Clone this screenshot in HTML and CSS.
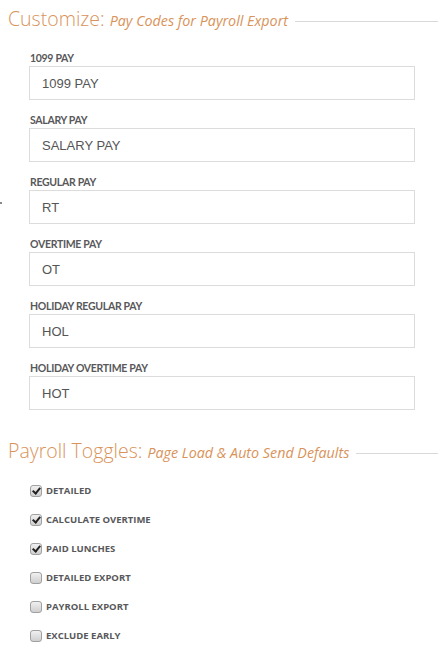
FILE: index.html
```html
<!DOCTYPE html>
<html lang="en">
<head>
    <meta charset="UTF-8">
    <title>Payroll Settings</title>
    <link rel="stylesheet" href="styles.css">
</head>
<body>
    <div class="panel">
        <h2 class="section-title">
            <span class="title-main">Customize:</span>
            <span class="title-sub">Pay Codes for Payroll Export</span>
            <span class="title-rule"></span>
        </h2>

        <div class="fields">
            <div class="field">
                <label>1099 PAY</label>
                <input type="text" value="1099 PAY">
            </div>
            <div class="field">
                <label>SALARY PAY</label>
                <input type="text" value="SALARY PAY">
            </div>
            <div class="field">
                <span class="stray"></span>
                <label>REGULAR PAY</label>
                <input type="text" value="RT">
            </div>
            <div class="field">
                <label>OVERTIME PAY</label>
                <input type="text" value="OT">
            </div>
            <div class="field">
                <label>HOLIDAY REGULAR PAY</label>
                <input type="text" value="HOL">
            </div>
            <div class="field">
                <label>HOLIDAY OVERTIME PAY</label>
                <input type="text" value="HOT">
            </div>
        </div>

        <h2 class="section-title second">
            <span class="title-main">Payroll Toggles:</span>
            <span class="title-sub">Page Load &amp; Auto Send Defaults</span>
            <span class="title-rule"></span>
        </h2>

        <ul class="toggles">
            <li><span class="box checked"></span>DETAILED</li>
            <li><span class="box checked"></span>CALCULATE OVERTIME</li>
            <li><span class="box checked"></span>PAID LUNCHES</li>
            <li><span class="box"></span>DETAILED EXPORT</li>
            <li><span class="box"></span>PAYROLL EXPORT</li>
            <li><span class="box"></span>EXCLUDE EARLY</li>
        </ul>
    </div>
</body>
</html>
```

FILE: styles.css
```css
body {
    margin: 0;
    background: #ffffff;
    font-family: Lato, 'Open Sans', sans-serif;
    color: #555555;
}
.panel {
    width: 438px;
}
.section-title {
    display: flex;
    align-items: baseline;
    margin: 0;
    padding: 5px 0 0 8px;
    height: 28px;
    font-family: 'Open Sans', sans-serif;
    font-weight: 300;
    color: #d9935a;
}
.section-title.second {
    padding-top: 0;
    margin-top: 27px;
}
.title-main {
    font-size: 19.5px;
}
.title-sub {
    font-size: 14.3px;
    font-style: italic;
    font-weight: 400;
    margin-left: 5px;
}
.title-rule {
    flex: 1;
    height: 1px;
    background: #d9d9d9;
    margin-left: 7px;
    align-self: center;
    margin-top: 4px;
}
.fields {
    padding: 15px 0 0 29px;
}
.field {
    position: relative;
    width: 386px;
    margin-bottom: 10px;
}
.field label {
    display: block;
    font-size: 10.5px;
    font-weight: 700;
    letter-spacing: -0.3px;
    color: #58585a;
    padding: 3px 0 0 1px;
    height: 15px;
    line-height: 14px;
}
.field input {
    display: block;
    box-sizing: border-box;
    width: 386px;
    height: 34px;
    border: 1px solid #dcdcdc;
    padding: 0 12px;
    font-family: 'Liberation Sans', Arial, sans-serif;
    font-size: 13px;
    color: #555555;
    background: #ffffff;
    outline: none;
}
.stray {
    position: absolute;
    left: -29px;
    top: 30px;
    width: 2px;
    height: 2px;
    background: #8a8a8a;
}
.toggles {
    list-style: none;
    margin: 0;
    padding: 11px 0 0 30px;
}
.toggles li {
    display: flex;
    align-items: center;
    height: 29px;
    font-family: 'Open Sans', sans-serif;
    font-size: 9.5px;
    font-weight: 700;
    color: #58585a;
}
.box {
    box-sizing: border-box;
    width: 12px;
    height: 12px;
    margin-right: 4px;
    border: 1px solid #a0a0a0;
    border-radius: 3px;
    background: linear-gradient(#f0f0f0, #cfcfcf);
    position: relative;
}
.box.checked::after {
    content: '';
    position: absolute;
    left: 3px;
    top: 0px;
    width: 3px;
    height: 6px;
    border: solid #222;
    border-width: 0 2px 2px 0;
    transform: rotate(40deg);
}
```
